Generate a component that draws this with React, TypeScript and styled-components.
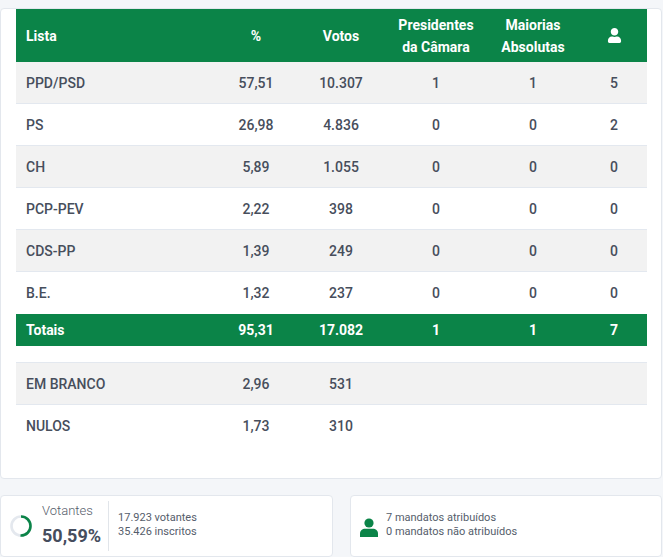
import React from "react";
import styled, { createGlobalStyle } from "styled-components";
import { FaUser } from "react-icons/fa";

const GlobalStyle = createGlobalStyle`
  html, body { margin: 0; padding: 0; }
  body {
    background: #f4f6f9;
    font-family: Roboto, "Liberation Sans", Arial, sans-serif;
    -webkit-font-smoothing: antialiased;
  }
  * { box-sizing: border-box; }
`;

const Page = styled.div`
  width: 662px;
  padding-top: 8px;
`;

const Card = styled.div`
  background: #fff;
  border: 1px solid #e3e7ed;
  border-radius: 4px;
  padding: 0 14px 31px 15px;
`;

const cols = "194px 92px 78px 112px 82px 1fr";

const HeaderRow = styled.div`
  display: grid;
  grid-template-columns: ${cols};
  align-items: center;
  height: 53px;
  background: #0b8448;
  color: #fff;
  font-size: 14px;
  font-weight: 700;
  line-height: 22px;
`;

const Row = styled.div<{ $shade?: boolean; $noBorder?: boolean }>`
  display: grid;
  grid-template-columns: ${cols};
  align-items: center;
  height: 42px;
  background: ${(p) => (p.$shade ? "#f2f2f2" : "#fff")};
  border-bottom: ${(p) => (p.$noBorder ? "none" : "1px solid #e3e8ef")};
  color: #474e5c;
  font-size: 14px;
  font-weight: 500;
`;

const TotalRow = styled.div`
  display: grid;
  grid-template-columns: ${cols};
  align-items: center;
  height: 32px;
  background: #0b8448;
  color: #fff;
  font-size: 14px;
  font-weight: 700;
`;

const Cell = styled.div<{ $left?: boolean; $last?: boolean }>`
  text-align: ${(p) => (p.$left ? "left" : "center")};
  padding-left: ${(p) => (p.$left ? "10px" : p.$last ? "7px" : "0")};
  display: flex;
  justify-content: ${(p) => (p.$left ? "flex-start" : "center")};
  align-items: center;
`;

const SecondTable = styled.div`
  margin-top: 16px;
  border-top: 1px solid #e3e8ef;
`;

const BottomGrid = styled.div`
  display: grid;
  grid-template-columns: 333px 1fr;
  column-gap: 17px;
  margin-top: 16px;
`;

const SmallCard = styled.div`
  background: #fff;
  border: 1px solid #e3e7ed;
  border-radius: 4px;
  height: 62px;
  display: flex;
  align-items: center;
`;

const VotersCard = styled(SmallCard)`
  padding-left: 9px;
`;

const SeatsCard = styled(SmallCard)`
  padding-left: 9px;
`;

const Donut = styled.svg`
  width: 22px;
  height: 22px;
  flex: none;
  margin-right: 10px;
`;

const BigStat = styled.div`
  display: flex;
  flex-direction: column;
  margin-right: 7px;
`;

const StatLabel = styled.div`
  font-size: 13px;
  font-weight: 300;
  color: #555d6b;
  line-height: 16px;
  margin-top: -1px;
`;

const StatValue = styled.div`
  font-size: 18px;
  font-weight: 700;
  color: #454d5d;
  line-height: 24px;
  margin-top: 5px;
`;

const Divider = styled.div`
  width: 1px;
  height: 50px;
  background: #e1e5ea;
  margin-right: 9px;
`;

const Lines = styled.div`
  font-size: 11px;
  line-height: 14px;
  color: #555d6b;
  margin-top: -2px;
`;

const SeatIcon = styled.svg`
  width: 18px;
  height: 19px;
  flex: none;
  margin-right: 8px;
  margin-top: 2px;
`;

type R = [string, string, string, string, string, string];

const rows: R[] = [
  ["PPD/PSD", "57,51", "10.307", "1", "1", "5"],
  ["PS", "26,98", "4.836", "0", "0", "2"],
  ["CH", "5,89", "1.055", "0", "0", "0"],
  ["PCP-PEV", "2,22", "398", "0", "0", "0"],
  ["CDS-PP", "1,39", "249", "0", "0", "0"],
  ["B.E.", "1,32", "237", "0", "0", "0"],
];

const extra: [string, string, string][] = [
  ["EM BRANCO", "2,96", "531"],
  ["NULOS", "1,73", "310"],
];

const pct = 50.59;
const r = 9.5;
const circ = 2 * Math.PI * r;

export default function App() {
  return (
    <>
      <GlobalStyle />
      <Page>
        <Card>
          <HeaderRow>
            <Cell $left>Lista</Cell>
            <Cell>%</Cell>
            <Cell>Votos</Cell>
            <Cell>
              Presidentes
              <br />
              da Câmara
            </Cell>
            <Cell>
              Maiorias
              <br />
              Absolutas
            </Cell>
            <Cell $last>
              <FaUser size={15} />
            </Cell>
          </HeaderRow>
          {rows.map((row, i) => (
            <Row key={row[0]} $shade={i % 2 === 0} $noBorder={i === rows.length - 1}>
              <Cell $left>{row[0]}</Cell>
              <Cell>{row[1]}</Cell>
              <Cell>{row[2]}</Cell>
              <Cell>{row[3]}</Cell>
              <Cell>{row[4]}</Cell>
              <Cell $last>{row[5]}</Cell>
            </Row>
          ))}
          <TotalRow>
            <Cell $left>Totais</Cell>
            <Cell>95,31</Cell>
            <Cell>17.082</Cell>
            <Cell>1</Cell>
            <Cell>1</Cell>
            <Cell $last>7</Cell>
          </TotalRow>
          <SecondTable>
            {extra.map((row, i) => (
              <Row key={row[0]} $shade={i === 0} $noBorder={i === extra.length - 1}>
                <Cell $left>{row[0]}</Cell>
                <Cell>{row[1]}</Cell>
                <Cell>{row[2]}</Cell>
                <Cell />
                <Cell />
                <Cell $last />
              </Row>
            ))}
          </SecondTable>
        </Card>
        <BottomGrid>
          <VotersCard>
            <Donut viewBox="0 0 22 22">
              <circle cx="11" cy="11" r={r} fill="none" stroke="#e4e8ee" strokeWidth="2.6" />
              <circle
                cx="11"
                cy="11"
                r={r}
                fill="none"
                stroke="#0b8448"
                strokeWidth="2.6"
                strokeDasharray={`${(circ * pct) / 100} ${circ}`}
                transform="rotate(-90 11 11)"
              />
            </Donut>
            <BigStat>
              <StatLabel>Votantes</StatLabel>
              <StatValue>50,59%</StatValue>
            </BigStat>
            <Divider />
            <Lines>
              <div>17.923 votantes</div>
              <div>35.426 inscritos</div>
            </Lines>
          </VotersCard>
          <SeatsCard>
            <SeatIcon viewBox="0 0 18 19">
              <circle cx="9" cy="5" r="4.6" fill="#0b8448" />
              <path d="M0 19 V15.5 C0 12.5 2.5 10.8 5 10.8 H13 C15.5 10.8 18 12.5 18 15.5 V19 Z" fill="#0b8448" />
            </SeatIcon>
            <Lines>
              <div>7 mandatos atribuídos</div>
              <div>0 mandatos não atribuídos</div>
            </Lines>
          </SeatsCard>
        </BottomGrid>
      </Page>
    </>
  );
}
